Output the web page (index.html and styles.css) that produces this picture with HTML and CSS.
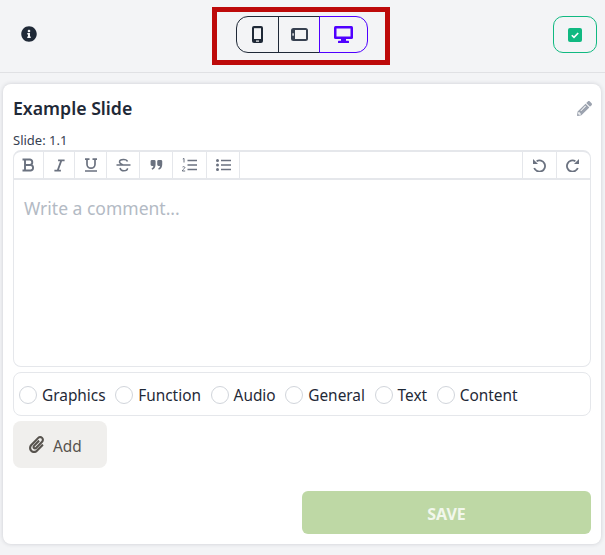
FILE: index.html
```html
<!DOCTYPE html>
<html lang="en">
<head>
  <meta charset="UTF-8" />
  <meta name="viewport" content="width=device-width, initial-scale=1.0"/>
  <title>Example Slide</title>
  <link rel="stylesheet" href="styles.css">
</head>
<body>
  <header class="topbar">
    <svg class="info-icon" viewBox="0 0 512 512"><path d="M256 8C119.043 8 8 119.083 8 256c0 136.997 111.043 248 248 248s248-111.003 248-248C504 119.083 392.957 8 256 8zm0 110c23.196 0 42 18.804 42 42s-18.804 42-42 42-42-18.804-42-42 18.804-42 42-42zm56 254c0 6.627-5.373 12-12 12h-88c-6.627 0-12-5.373-12-12v-24c0-6.627 5.373-12 12-12h12v-64h-12c-6.627 0-12-5.373-12-12v-24c0-6.627 5.373-12 12-12h64c6.627 0 12 5.373 12 12v100h12c6.627 0 12 5.373 12 12v24z"/></svg>

    <div class="highlight">
      <div class="devices">
        <button class="device phone">
          <svg width="11" height="17" viewBox="0 0 11 17"><rect width="11" height="17" rx="2" fill="#1f2937"/><rect x="2" y="2.200" width="7" height="10.800" fill="#f3f4f6"/><rect x="4" y="14.500" width="3" height="1.200" fill="#f3f4f6"/></svg>
        </button>
        <button class="device tablet">
          <svg width="17" height="13" viewBox="0 0 17 13"><rect width="17" height="13" rx="2.500" fill="#374151"/><rect x="4" y="2" width="11" height="9" fill="#f3f4f6"/><rect x="1.400" y="5.300" width="1.400" height="2.400" fill="#f3f4f6"/></svg>
        </button>
        <button class="device desktop active">
          <svg width="19" height="17" viewBox="0 0 19 17"><rect width="19" height="13" rx="1.500" fill="#4f00ff"/><rect x="2.500" y="2.500" width="14" height="8" fill="#f3f4f6"/><rect x="7" y="13" width="5" height="3" fill="#4f00ff"/><rect x="4" y="14.800" width="11" height="2.200" rx="0.500" fill="#4f00ff"/></svg>
        </button>
      </div>
    </div>

    <button class="approve">
      <svg width="14" height="14" viewBox="0 0 14 14"><rect width="14" height="14" rx="2" fill="#10b981"/><path d="M3.800 7.200l2.200 2.200 4.200-4.400" fill="none" stroke="#fff" stroke-width="1.600"/></svg>
    </button>
  </header>

  <main class="card">
    <div class="card-head">
      <h2>Example Slide</h2>
      <svg class="edit-icon" viewBox="0 0 512 512"><path d="M497.900 142.100l-46.100 46.100c-4.700 4.700-12.300 4.700-17 0l-111-111c-4.700-4.700-4.700-12.300 0-17l46.100-46.100c18.700-18.700 49.100-18.700 67.900 0l60.100 60.100c18.800 18.700 18.800 49.100 0 67.900zM284.200 99.800L21.600 362.400.4 483.900c-2.900 16.400 11.400 30.600 27.800 27.800l121.500-21.300 262.600-262.600c4.700-4.700 4.700-12.300 0-17l-111-111c-4.800-4.700-12.400-4.700-17.100 0zM124.100 339.900c-5.500-5.500-5.500-14.300 0-19.800l154-154c5.500-5.500 14.300-5.500 19.800 0s5.500 14.300 0 19.800l-154 154c-5.500 5.500-14.300 5.500-19.800 0zM88 424h48v36.300l-64.500 11.300-31.100-31.100L51.700 376H88v48z"/></svg>
    </div>
    <div class="slide-no">Slide: 1.1</div>

    <div class="editor">
      <div class="toolbar">
        <button class="tool">
          <svg width="14" height="14" viewBox="0 0 14 14"><path d="M3 1.500h5a2.800 2.800 0 0 1 0 5.500H3zM3 7h5.800a2.800 2.800 0 0 1 0 5.500H3zM0.500 1.500H4M0.500 12.500H4" fill="none" stroke="#6b7280" stroke-width="1.900"/></svg>
        </button>
        <button class="tool">
          <svg width="13" height="13" viewBox="0 0 14 14"><path d="M5.500 1.500h7M1.500 12.500h7M9 1.500l-4 11" fill="none" stroke="#6b7280" stroke-width="1.900"/></svg>
        </button>
        <button class="tool">
          <svg width="14" height="14" viewBox="0 0 14 14"><path d="M1 1.200h4.500M8.500 1.200H13M3 1.200v5a4 4 0 0 0 8 0v-5M1 13h12" fill="none" stroke="#6b7280" stroke-width="1.700"/></svg>
        </button>
        <button class="tool">
          <svg width="15" height="14" viewBox="0 0 15 14"><path d="M0.500 7h14M11.500 3.500C11 2 9.500 1.500 7.500 1.500 5 1.500 3.500 2.500 3.500 4S5 6 7.500 7M4 10c0.500 2 2 2.800 3.800 2.800 2 0 3.700-1 3.700-2.500" fill="none" stroke="#6b7280" stroke-width="1.500"/></svg>
        </button>
        <button class="tool">
          <svg width="13" height="10" viewBox="0 0 13 11"><path d="M0 1.500A1.500 1.500 0 0 1 1.500 0h2.500A1.500 1.500 0 0 1 5.500 1.500V5c0 3-1.500 5-3.700 5.700L1 9.300C2.500 8.500 3 7.500 3 6.500H1.500A1.500 1.500 0 0 1 0 5zM7.300 1.500A1.500 1.500 0 0 1 8.800 0h2.500a1.500 1.500 0 0 1 1.500 1.500V5c0 3-1.500 5-3.700 5.700L8.300 9.300c1.500-.8 2-1.800 2-2.800H8.800A1.500 1.500 0 0 1 7.300 5z" fill="#6b7280"/></svg>
        </button>
        <button class="tool">
          <svg width="15" height="14" viewBox="0 0 15 14"><path d="M5.500 2.500H15M5.500 7H15M5.500 11.500H15" stroke="#6b7280" stroke-width="1.700"/><path d="M0.800 1l1.200-.6v4.100M0.300 9.300c.2-.9 2.600-.9 2.600.3 0 1-2.600 1.900-2.600 3.400h2.900" fill="none" stroke="#6b7280" stroke-width="1"/></svg>
        </button>
        <button class="tool">
          <svg width="15" height="12" viewBox="0 0 15 12"><path d="M5 1.500h10M5 6h10M5 10.500h10" stroke="#6b7280" stroke-width="1.700"/><circle cx="1.500" cy="1.500" r="1.500" fill="#6b7280"/><circle cx="1.500" cy="6" r="1.500" fill="#6b7280"/><circle cx="1.500" cy="10.500" r="1.500" fill="#6b7280"/></svg>
        </button>
        <div class="tool-gap"></div>
        <button class="tool history">
          <svg width="14" height="14" viewBox="0 0 14 14"><path d="M4.600 3.200A5.600 5.600 0 1 1 2.200 10" fill="none" stroke="#6b7280" stroke-width="1.800"/><path d="M1 1v5h5z" fill="#6b7280"/></svg>
        </button>
        <button class="tool history">
          <svg width="14" height="14" viewBox="0 0 14 14"><path d="M9.400 3.200A5.600 5.600 0 1 0 11.800 10" fill="none" stroke="#6b7280" stroke-width="1.800"/><path d="M13 1v5H8z" fill="#6b7280"/></svg>
        </button>
      </div>
      <div class="editor-body">Write a comment...</div>
    </div>

    <div class="categories">
      <label class="category"><span class="radio"></span>Graphics</label>
      <label class="category"><span class="radio"></span>Function</label>
      <label class="category"><span class="radio"></span>Audio</label>
      <label class="category"><span class="radio"></span>General</label>
      <label class="category"><span class="radio"></span>Text</label>
      <label class="category"><span class="radio"></span>Content</label>
    </div>

    <button class="add-btn">
      <svg width="15" height="17" viewBox="0 0 448 512"><path d="M43.246 466.142c-58.430-60.289-57.341-157.511 1.386-217.581L254.392 34c44.316-45.332 116.351-45.336 160.671 0 43.890 44.894 43.943 117.329 0 162.276L232.214 383.128c-29.855 30.537-78.633 30.111-107.982-.998-28.275-29.970-27.368-77.473 1.452-106.953l143.743-146.835c6.182-6.314 16.312-6.422 22.626-.241l22.861 22.379c6.315 6.182 6.422 16.312.241 22.626L171.427 319.927c-4.932 5.045-5.236 13.428-.648 18.292 4.372 4.634 11.245 4.711 15.688.165l182.849-186.851c19.613-20.062 19.613-52.725-.011-72.798-19.189-19.627-49.957-19.637-69.154 0L90.390 293.295c-34.763 35.560-35.299 93.120-1.191 128.313 34.010 35.093 88.985 35.137 123.058.286l172.060-175.999c6.177-6.319 16.307-6.433 22.626-.256l22.877 22.364c6.319 6.177 6.434 16.307.256 22.626l-172.060 175.998c-59.576 60.938-155.943 60.216-214.770-.485z" fill="#57534e"/></svg>
      <span class="add-label">Add</span>
    </button>

    <div class="save-row">
      <button class="save-btn">SAVE</button>
    </div>
  </main>
</body>
</html>
```

FILE: styles.css
```css
* {
  box-sizing: border-box;
}

body {
  margin: 0;
  height: 555px;
  overflow: hidden;
  background: #f3f4f6;
  font-family: 'Noto Sans', sans-serif;
  color: #1f2937;
}

button {
  font-family: inherit;
  cursor: pointer;
}

.topbar {
  height: 73px;
  padding: 7px 8px 0 21px;
  display: flex;
  justify-content: space-between;
  align-items: flex-start;
  border-bottom: 1px solid #e0e1e4;
}

.info-icon {
  width: 16px;
  height: 16px;
  margin-top: 19px;
  fill: #1f2937;
}

.highlight {
  width: 178px;
  height: 58px;
  margin-left: 12px;
  padding: 4px 0 0 2px;
  border: 5px solid #bd0a0a;
  display: flex;
  justify-content: center;
  align-items: flex-start;
}

.devices {
  display: flex;
  height: 37px;
}

.device {
  height: 37px;
  padding: 0;
  background: none;
  border: 1px solid #1f2937;
  display: flex;
  justify-content: center;
  align-items: center;
}

.phone {
  width: 43px;
  border-radius: 12px 0 0 12px;
}

.tablet {
  width: 42px;
  margin-left: -1px;
}

.desktop {
  width: 49px;
  margin-left: -1px;
  border-radius: 0 12px 12px 0;
}

.active {
  border-color: #4f00ff;
}

.approve {
  width: 44px;
  height: 37px;
  margin-top: 9px;
  padding: 0;
  background: none;
  border: 1px solid #10b981;
  border-radius: 10px;
  display: flex;
  justify-content: center;
  align-items: center;
}

.card {
  margin: 11px 4px 0 3px;
  height: 460px;
  padding: 10px;
  background: #fff;
  border-radius: 8px;
  box-shadow: 0 0 4px rgba(31, 41, 55, 0.18);
}

.card-head {
  display: flex;
  justify-content: space-between;
  align-items: center;
  height: 29px;
}

.card-head h2 {
  margin: 0;
  font-size: 17.7px;
  font-weight: 600;
  line-height: 29px;
}

.edit-icon {
  width: 15px;
  height: 15px;
  margin-right: -1px;
  fill: #9ca3af;
}

.slide-no {
  margin-top: 9px;
  font-size: 13px;
  line-height: 17px;
  color: #374151;
}

.editor {
  height: 217px;
  margin-top: 1px;
  border: 1px solid #e5e7eb;
  border-top-width: 2px;
  border-radius: 8px;
  display: flex;
  flex-direction: column;
}

.toolbar {
  height: 28px;
  flex: none;
  display: flex;
  border-bottom: 2px solid #e5e7eb;
}

.tool {
  width: 33px;
  padding: 0;
  background: none;
  border: none;
  border-right: 1px solid #e5e7eb;
  display: flex;
  justify-content: center;
  align-items: center;
}

.tool:nth-child(1) {
  width: 30px;
}

.tool:nth-child(2) {
  width: 31px;
}

.tool:nth-child(3) {
  width: 32px;
}

.tool:nth-child(6) {
  width: 34px;
}

.tool-gap {
  flex: 1;
}

.history {
  width: 34px;
  padding-right: 2px;
  border-left: 1px solid #e5e7eb;
  border-right: none;
}

.editor-body {
  flex: 1;
  padding: 16px 10px;
  font-size: 17.5px;
  line-height: 24px;
  color: #b3bac4;
}

.categories {
  height: 44px;
  margin-top: 5px;
  padding: 2px 5px 0;
  border: 1px solid #e5e7eb;
  border-radius: 8px;
  display: flex;
  align-items: center;
  gap: 9.6px;
}

.category {
  display: flex;
  align-items: center;
  gap: 5px;
  font-size: 15.4px;
  color: #1f2937;
}

.radio {
  width: 18px;
  height: 18px;
  border: 1px solid #d1d5db;
  border-radius: 50%;
}

.add-btn {
  width: 94px;
  height: 47px;
  margin-top: 5px;
  padding: 0 0 0 16px;
  background: #f0efed;
  border: none;
  border-radius: 8px;
  display: flex;
  align-items: center;
  gap: 9px;
  font-size: 15.4px;
  color: #57534e;
}

.add-label {
  padding-top: 4px;
}

.save-row {
  margin-top: 23px;
  display: flex;
  justify-content: flex-end;
}

.save-btn {
  width: 289px;
  height: 43px;
  padding-top: 4px;
  background: #bed8a5;
  border: none;
  border-radius: 6px;
  font-size: 16px;
  font-weight: 700;
  color: #f2f7ec;
}
```
